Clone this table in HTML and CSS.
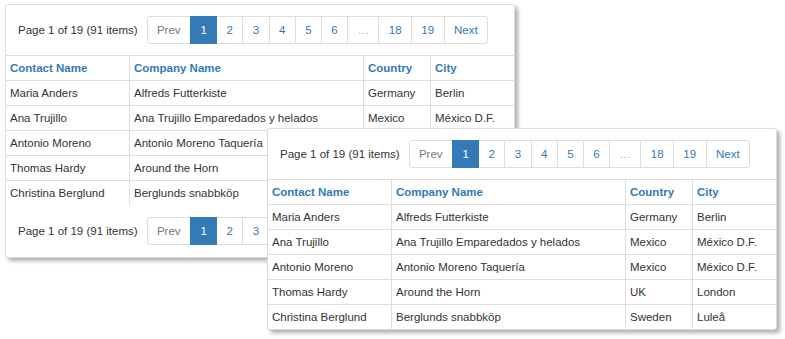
FILE: index.html
```html
<!DOCTYPE html>
<html lang="en">
  <head>
    <meta charset="UTF-8" />
    <title>Customers grid</title>
    <link rel="stylesheet" href="styles.css">
  </head>
  <body>
    <div class="stage">
      <!-- Grid with pager on top and bottom -->
      <section class="grid-card card-back">
        <div class="pager pager-top">
          <span class="pager-info">Page 1 of 19 (91 items)</span>
          <ul class="pagination">
            <li class="disabled"><a>Prev</a></li>
            <li class="active"><a>1</a></li>
            <li><a>2</a></li>
            <li><a>3</a></li>
            <li><a>4</a></li>
            <li><a>5</a></li>
            <li><a>6</a></li>
            <li class="disabled"><a>…</a></li>
            <li><a>18</a></li>
            <li><a>19</a></li>
            <li><a>Next</a></li>
          </ul>
        </div>
        <table class="grid">
          <thead>
            <tr>
              <th class="col-contact">Contact Name</th>
              <th class="col-company">Company Name</th>
              <th class="col-country">Country</th>
              <th class="col-city">City</th>
            </tr>
          </thead>
          <tbody>
            <tr><td>Maria Anders</td><td>Alfreds Futterkiste</td><td>Germany</td><td>Berlin</td></tr>
            <tr><td>Ana Trujillo</td><td>Ana Trujillo Emparedados y helados</td><td>Mexico</td><td>México D.F.</td></tr>
            <tr><td>Antonio Moreno</td><td>Antonio Moreno Taquería</td><td>Mexico</td><td>México D.F.</td></tr>
            <tr><td>Thomas Hardy</td><td>Around the Horn</td><td>UK</td><td>London</td></tr>
            <tr><td>Christina Berglund</td><td>Berglunds snabbköp</td><td>Sweden</td><td>Luleå</td></tr>
          </tbody>
        </table>
        <div class="pager pager-bottom">
          <span class="pager-info">Page 1 of 19 (91 items)</span>
          <ul class="pagination">
            <li class="disabled"><a>Prev</a></li>
            <li class="active"><a>1</a></li>
            <li><a>2</a></li>
            <li><a>3</a></li>
            <li><a>4</a></li>
            <li><a>5</a></li>
            <li><a>6</a></li>
            <li class="disabled"><a>…</a></li>
            <li><a>18</a></li>
            <li><a>19</a></li>
            <li><a>Next</a></li>
          </ul>
        </div>
      </section>

      <!-- Grid with pager on top only -->
      <section class="grid-card card-front">
        <div class="pager pager-top">
          <span class="pager-info">Page 1 of 19 (91 items)</span>
          <ul class="pagination">
            <li class="disabled"><a>Prev</a></li>
            <li class="active"><a>1</a></li>
            <li><a>2</a></li>
            <li><a>3</a></li>
            <li><a>4</a></li>
            <li><a>5</a></li>
            <li><a>6</a></li>
            <li class="disabled"><a>…</a></li>
            <li><a>18</a></li>
            <li><a>19</a></li>
            <li><a>Next</a></li>
          </ul>
        </div>
        <table class="grid">
          <thead>
            <tr>
              <th class="col-contact">Contact Name</th>
              <th class="col-company">Company Name</th>
              <th class="col-country">Country</th>
              <th class="col-city">City</th>
            </tr>
          </thead>
          <tbody>
            <tr><td>Maria Anders</td><td>Alfreds Futterkiste</td><td>Germany</td><td>Berlin</td></tr>
            <tr><td>Ana Trujillo</td><td>Ana Trujillo Emparedados y helados</td><td>Mexico</td><td>México D.F.</td></tr>
            <tr><td>Antonio Moreno</td><td>Antonio Moreno Taquería</td><td>Mexico</td><td>México D.F.</td></tr>
            <tr><td>Thomas Hardy</td><td>Around the Horn</td><td>UK</td><td>London</td></tr>
            <tr><td>Christina Berglund</td><td>Berglunds snabbköp</td><td>Sweden</td><td>Luleå</td></tr>
          </tbody>
        </table>
      </section>
    </div>
  </body>
</html>
```

FILE: styles.css
```css
:root {
  --blue: #337ab7;
  --line: #ddd;
  --text-color: #333;
}

* {
  margin: 0;
  padding: 0;
  box-sizing: border-box;
}

body {
  background: #fff;
  font-family: "Liberation Sans", Arial, sans-serif;
  font-size: 11.5px;
  line-height: 16px;
  color: var(--text-color);
}

/* free canvas holding the two overlapping grids */
.stage {
  position: relative;
  width: 785px;
  height: 339px;
}

.grid-card {
  position: absolute;
  width: 510px;
  background: #fff;
  border: 1px solid var(--line);
  border-radius: 3px;
  box-shadow: 3px 3px 4px rgba(0, 0, 0, 0.32);
}

.card-back { left: 5px; top: 4px; }
.card-front { left: 267px; top: 128px; }

/* pager */
.pager {
  display: flex;
  align-items: center;
  gap: 9px;
  padding: 11px 12px;
}

.pager-top { border-bottom: 1px solid var(--line); }
.pager-bottom { padding: 12px 12px; }

.pagination {
  display: flex;
  list-style: none;
}

.pagination li a {
  display: block;
  height: 28px;
  line-height: 26px;
  padding: 0 9.4px;
  margin-left: -1px;
  border: 1px solid var(--line);
  color: var(--blue);
  background: #fff;
}

.pagination li:first-child a {
  margin-left: 0;
  border-radius: 3px 0 0 3px;
}

.pagination li:last-child a {
  border-radius: 0 3px 3px 0;
}

.pagination .active a {
  position: relative;
  background: var(--blue);
  border-color: var(--blue);
  color: #fff;
}

.pagination .disabled a {
  color: #777;
}

.pagination .disabled:not(:first-child) a {
  color: #aaa;
}

/* table */
.grid {
  width: 100%;
  table-layout: fixed;
  border-spacing: 0;
}

.grid th,
.grid td {
  padding: 4px 4px;
  text-align: left;
  white-space: nowrap;
  overflow: hidden;
}

.grid th {
  color: var(--blue);
  font-weight: bold;
}

.grid th + th,
.grid td + td {
  border-left: 1px solid var(--line);
}

.grid tbody td {
  border-top: 1px solid var(--line);
}

.col-contact { width: 123px; }
.col-company { width: 234px; }
.col-country { width: 67px; }
.col-city { width: 84px; }
```
